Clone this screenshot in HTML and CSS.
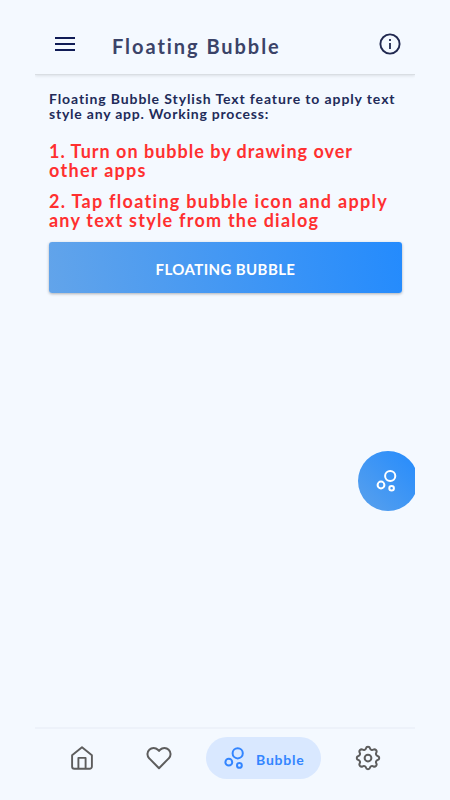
FILE: index.html
```
<!DOCTYPE html>
<html lang="en">
<head>
    <meta charset="UTF-8">
    <meta name="viewport" content="width=device-width, initial-scale=1.0">
    <title>Floating Bubble</title>
    <link rel="stylesheet" href="styles.css">
</head>
<body>
    <div class="app">
        <header class="topbar">
            <svg class="menu-icon" width="20" height="14" viewBox="0 0 20 14">
                <path d="M0 1h20M0 7h20M0 13h20" fill="none" stroke="#101c56" stroke-width="1.9"/>
            </svg>
            <h1>Floating Bubble</h1>
            <svg class="info-icon" width="22" height="22" viewBox="0 0 22 22">
                <circle cx="11" cy="11" r="9.6" fill="none" stroke="#202850" stroke-width="1.9"/>
                <path d="M11 10v6M11 6v2" fill="none" stroke="#202850" stroke-width="1.8"/>
            </svg>
        </header>

        <main>
            <p class="intro"><span class="intro-a">Floating Bubble Stylish Text feature to apply text</span><br><span class="intro-b">style any app. Working process:</span></p>
            <p class="step"><span class="step-a">1. Turn on bubble by drawing over</span><br><span class="step-b">other apps</span></p>
            <p class="step"><span class="step-c">2. Tap floating bubble icon and apply</span><br><span class="step-d">any text style from the dialog</span></p>
            <button class="main-btn">FLOATING BUBBLE</button>
        </main>

        <div class="bubble">
            <svg width="22" height="24" viewBox="0 0 22 24">
                <g fill="none" stroke="#fff" stroke-width="2">
                    <circle cx="14.2" cy="8" r="5.1"/>
                    <circle cx="5" cy="17" r="3.4"/>
                    <circle cx="15.6" cy="20.2" r="2.3"/>
                </g>
            </svg>
        </div>

        <nav class="bottombar">
            <svg class="home" width="24" height="26" viewBox="0 0 24 26">
                <path d="M2.1 10.2 12 2.2l9.9 8v11.3a2.3 2.3 0 0 1-2.3 2.3H4.4a2.3 2.3 0 0 1-2.3-2.3zM8.4 23.8V12.9h7.2v10.9" fill="none" stroke="#5d5d5d" stroke-width="1.9" stroke-linejoin="round"/>
            </svg>
            <svg class="heart" width="26" height="24" viewBox="0 0 26 24">
                <path d="M13 22.2 3.3 12.4a6 6 0 0 1 0-8.7 6 6 0 0 1 8.6 0L13 4.9l1.1-1.2a6 6 0 0 1 8.6 0 6 6 0 0 1 0 8.7z" fill="none" stroke="#5d5d5d" stroke-width="2" stroke-linejoin="round"/>
            </svg>
            <div class="tab-active">
                <svg width="20" height="24" viewBox="0 0 20 24">
                    <g fill="none" stroke="#3385ff" stroke-width="2">
                        <circle cx="13.7" cy="7.3" r="5.1"/>
                        <circle cx="4.8" cy="16.2" r="3.4"/>
                        <circle cx="15.4" cy="19.4" r="2.4"/>
                    </g>
                </svg>
                <span>Bubble</span>
            </div>
            <svg class="settings" width="30" height="30" viewBox="0 0 24 24">
                <path d="M10.325 4.317c.426-1.756 2.924-1.756 3.35 0a1.724 1.724 0 002.573 1.066c1.543-.94 3.31.826 2.37 2.37a1.724 1.724 0 001.065 2.572c1.756.426 1.756 2.924 0 3.35a1.724 1.724 0 00-1.066 2.573c.94 1.543-.826 3.31-2.37 2.37a1.724 1.724 0 00-2.572 1.065c-.426 1.756-2.924 1.756-3.35 0a1.724 1.724 0 00-2.573-1.066c-1.543.94-3.31-.826-2.37-2.37a1.724 1.724 0 00-1.065-2.572c-1.756-.426-1.756-2.924 0-3.35a1.724 1.724 0 001.066-2.573c-.94-1.543.826-3.31 2.37-2.37.996.608 2.296.07 2.572-1.065z" fill="none" stroke="#5d5d5d" stroke-width="1.6" stroke-linejoin="round"/>
                <circle cx="12" cy="12" r="2.7" fill="none" stroke="#5d5d5d" stroke-width="1.6"/>
            </svg>
        </nav>
    </div>
</body>
</html>
```
FILE: styles.css
```
* {
    box-sizing: border-box;
}

body {
    margin: 0;
    background-color: #f4f9ff;
    font-family: Lato, sans-serif;
    font-weight: bold;
}

.app {
    position: relative;
    display: flex;
    flex-direction: column;
    width: 380px;
    height: 800px;
    margin-left: 35px;
    overflow: hidden;
}

.topbar {
    display: flex;
    align-items: center;
    height: 75px;
    padding: 14px 14px 0 20px;
    border-bottom: 1px solid #d9dee3;
    box-shadow: 0 1px 3px rgba(0, 0, 0, 0.1);
}

h1 {
    margin: 3px auto 0 37px;
    font-size: 20px;
    line-height: 24px;
    letter-spacing: 1.95px;
    color: #3b4368;
    white-space: nowrap;
}

main {
    flex: 1;
    padding: 16px 13px 0 14px;
}

p {
    margin: 0;
    white-space: nowrap;
}

.intro {
    margin-bottom: 21px;
    font-size: 14px;
    line-height: 15px;
    color: #222b59;
}

.intro-a {
    letter-spacing: 0.89px;
}

.intro-b {
    letter-spacing: 0.78px;
}

.step {
    margin-bottom: 12px;
    font-size: 18px;
    line-height: 19px;
    color: #ff3030;
}

.step-a {
    letter-spacing: 1px;
}

.step-b {
    letter-spacing: 1.3px;
}

.step-c {
    letter-spacing: 1.29px;
}

.step-d {
    letter-spacing: 1.23px;
}

.main-btn {
    display: block;
    width: 353px;
    height: 51px;
    padding: 3px 0 0;
    border: 0;
    border-radius: 3px;
    background: linear-gradient(80deg, #62a4ea, #248bfd);
    box-shadow: 0 1px 3px rgba(0, 0, 0, 0.3);
    font-family: inherit;
    font-weight: bold;
    font-size: 15px;
    letter-spacing: 0.4px;
    color: #fff;
}

.bubble {
    position: absolute;
    left: 323px;
    top: 451px;
    width: 60px;
    height: 60px;
    padding: 17px 0 0 18px;
    border-radius: 50%;
    background: linear-gradient(45deg, #5aa1ec, #248bfd);
}

.bottombar {
    display: flex;
    align-items: center;
    height: 73px;
    padding: 0 32px 13px 35px;
    border-top: 2px solid #edf2fa;
}

.heart {
    margin-left: 52px;
}

.tab-active {
    display: flex;
    align-items: center;
    width: 115px;
    height: 42px;
    margin-left: 34px;
    padding-left: 18px;
    border-radius: 21px;
    background-color: #d9e8ff;
    color: #3385ff;
    font-size: 14px;
    letter-spacing: 0.8px;
}

.tab-active span {
    margin: 3px 0 0 12px;
}

.settings {
    margin-left: 32px;
}
```
